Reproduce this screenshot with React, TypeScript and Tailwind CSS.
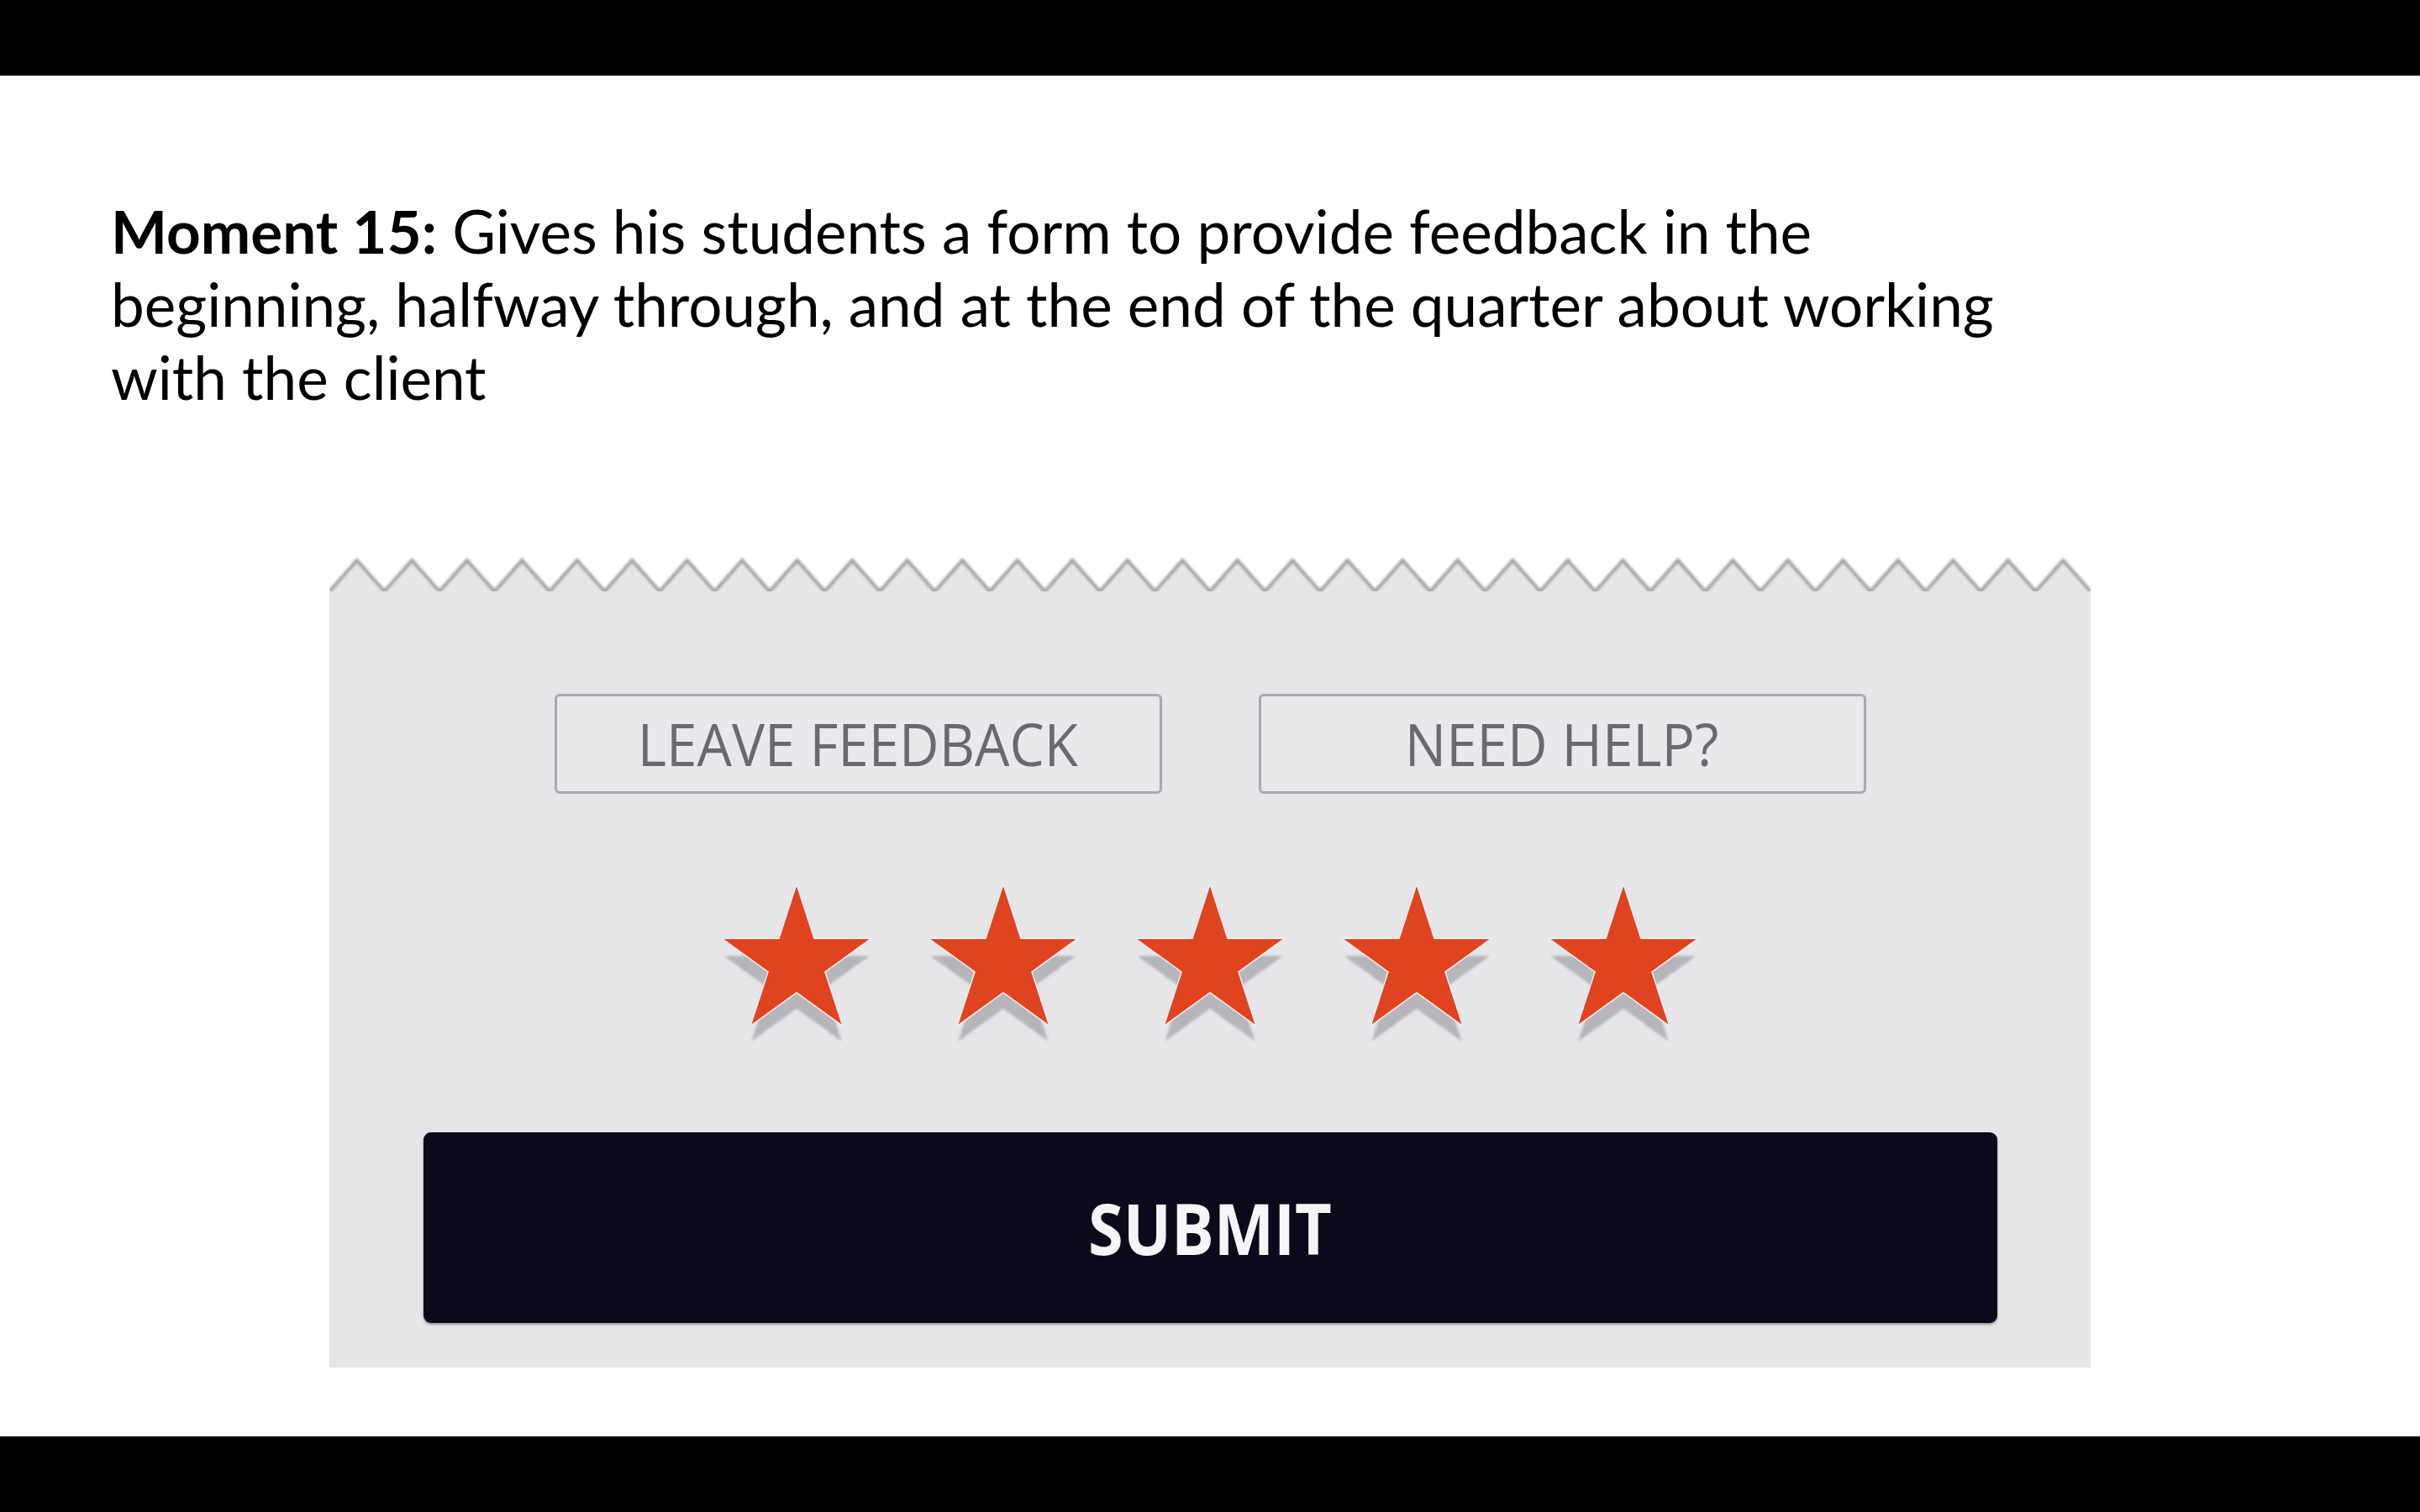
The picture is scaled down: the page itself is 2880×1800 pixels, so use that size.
import React from 'react';

const STAR_POINTS =
  '100,9 120.43,71.88 186.55,71.88 133.06,110.74 153.49,173.62 100,134.76 46.51,173.62 66.94,110.74 13.45,71.88 79.57,71.88';

// zigzag edge along the top of the torn panel
const PANEL_W = 2096;
const TEETH = 32;
const buildZigzag = () => {
  const step = PANEL_W / TEETH;
  const pts: string[] = [];
  for (let i = 0; i <= TEETH; i++) {
    pts.push(`${i * step},42`);
    if (i < TEETH) pts.push(`${i * step + step / 2},5`);
  }
  return pts.join(' ');
};

const Star: React.FC = () => (
  <svg width="246" height="200" viewBox="-23 0 246 200" className="block">
    <defs>
      <filter id="starShadow" x="-20%" y="-20%" width="140%" height="140%">
        <feGaussianBlur stdDeviation="1.5" />
      </filter>
    </defs>
    <polygon points={STAR_POINTS} transform="translate(0 20)" fill="#b5b5ba" filter="url(#starShadow)" />
    <polygon
      points={STAR_POINTS}
      fill="#e0431f"
      stroke="#eeeef0"
      strokeWidth="3"
      strokeLinejoin="miter"
      style={{ paintOrder: 'stroke' }}
    />
  </svg>
);

const OutlineButton: React.FC<{ label: string }> = ({ label }) => (
  <div className="w-[723px] h-[119px] rounded-[6px] border-[3px] border-[#a9a9ae] bg-[#e9e9ec] flex items-center justify-center">
    <span className="inline-block text-[69px] leading-none font-medium text-[#69696f] font-['Open_Sans',sans-serif] scale-x-[0.95]">
      {label}
    </span>
  </div>
);

export default function App() {
  const zig = buildZigzag();
  return (
    <div className="w-[2880px] h-[1800px] flex flex-col bg-white">
      <div className="h-[90px] bg-black shrink-0" />

      <div className="flex-1 flex flex-col">
        {/* Title */}
        <p className="pt-[141px] pl-[132px] text-[71px] leading-[87px] text-black font-['Lato',sans-serif] whitespace-nowrap">
          <span className="font-bold">Moment 15:</span> Gives his students a form to provide feedback in the
          <br />
          beginning, halfway through, and at the end of the quarter about working
          <br />
          with the client
        </p>

        {/* Feedback form panel */}
        <div className="mt-[170px] mx-auto w-[2096px] flex flex-col">
          <svg width={PANEL_W} height="42" viewBox={`0 0 ${PANEL_W} 42`} className="block">
            <defs>
              <filter id="edgeBlur" x="-1%" y="-50%" width="102%" height="200%">
                <feGaussianBlur stdDeviation="1.8" />
              </filter>
            </defs>
            <polygon points={`0,42 ${zig} ${PANEL_W},42 ${PANEL_W},43 0,43`} fill="#e6e6e8" />
            <polyline points={zig} fill="none" stroke="#a0a0a4" strokeWidth="4" filter="url(#edgeBlur)" />
          </svg>

          <div className="bg-[#e6e6e9] pt-[122px] pb-[53px] flex flex-col items-center">
            <div className="flex gap-[115px]">
              <OutlineButton label="LEAVE FEEDBACK" />
              <OutlineButton label="NEED HELP?" />
            </div>

            <div className="flex mt-[101px]">
              {[0, 1, 2, 3, 4].map((i) => (
                <Star key={i} />
              ))}
            </div>

            <div className="mt-[102px] w-[1873px] h-[227px] rounded-[9px] bg-[#0a0a1a] shadow-[0_2px_3px_rgba(0,0,0,0.35)] flex items-center justify-center">
              <span className="inline-block text-[84px] leading-none font-bold text-[#f5f5f8] font-['Open_Sans',sans-serif] scale-x-[0.9]">
                SUBMIT
              </span>
            </div>
          </div>
        </div>
      </div>

      <div className="h-[90px] bg-black shrink-0" />
    </div>
  );
}
